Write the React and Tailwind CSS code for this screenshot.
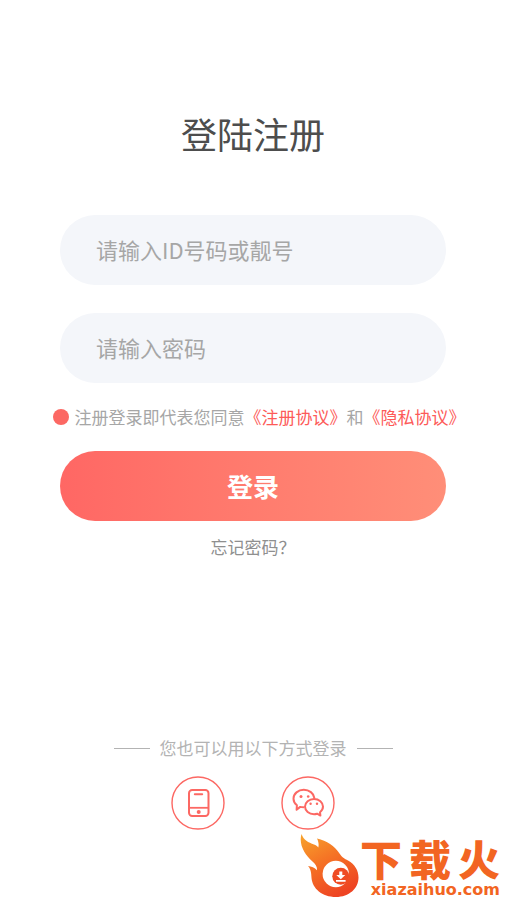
function PhoneIcon() {
  return (
    <svg viewBox="0 0 54 54" className="size-[54px]" fill="none" stroke="#fc6863" aria-hidden="true">
      <circle cx="27" cy="27" r="26" strokeWidth="1.4" />
      <rect x="18" y="14" width="19.5" height="26" rx="3.2" strokeWidth="2" />
      <path d="M18 31.8h19.5" strokeWidth="1.8" />
      <path d="M23.8 18.3h7.4" strokeWidth="2" strokeLinecap="round" />
      <circle cx="27.7" cy="36" r="2" fill="#fc6863" stroke="none" />
    </svg>
  );
}

function WechatIcon() {
  return (
    <svg viewBox="0 0 54 54" className="size-[54px]" fill="none" stroke="#fc6863" aria-hidden="true">
      <circle cx="27" cy="27" r="26" strokeWidth="1.4" />
      <path
        d="M22.5 31.3c-1 0-2.200-.1-3.300-.4L15.600 33.800l.3-4.600c-2.200-1.800-3.400-4-3.400-6.500 0-5 4.600-8.900 10.300-8.900 5.500 0 9.900 3.500 10.500 8"
        strokeWidth="2" strokeLinejoin="round" strokeLinecap="round"
      />
      <path
        d="M33 22.900c5 0 9 3.400 9 7.700 0 2.300-1.200 4.300-3 5.600l.4 3.400-3.300-1.900c-1 .3-2 .5-3.100.5-5 0-9-3.400-9-7.600s4-7.700 9-7.700Z"
        strokeWidth="2" strokeLinejoin="round"
      />
      <g fill="#fc6863" stroke="none">
        <circle cx="20" cy="20.500" r="1.500" />
        <circle cx="27.200" cy="20.500" r="1.300" />
        <circle cx="29.600" cy="27.800" r="1.200" />
        <circle cx="36" cy="27.800" r="1.200" />
      </g>
    </svg>
  );
}

function FlameLogo() {
  return (
    <svg viewBox="0 0 60 64" className="h-16 w-[60px]" aria-hidden="true">
      <defs>
        <linearGradient id="flame" x1="0.1" y1="0" x2="0.6" y2="1">
          <stop offset="0" stopColor="#f7a02c" />
          <stop offset="0.45" stopColor="#f57325" />
          <stop offset="1" stopColor="#ee4423" />
        </linearGradient>
      </defs>
      <path
        fill="url(#flame)"
        d="M1.500 0C3.500 6 8.500 8.500 14 10.500c2 .8 3.200 1.600 4.300 3C19 10.500 18.500 7.500 17 4.500c10 2 17.500 7.500 22.500 15 2.500 4 5 5 8.500 7C55 30.500 58.500 36.500 58.500 43.500 58.500 54.500 49 63 36 63 22 63 12.500 54.500 11.500 44c-.3-4.500-.3-8.500-3.500-12 3.500.3 6.500 1.700 9 4.300.3-3-1-5.800-4.500-8.800C4.500 20.500-1.500 10.500 1.500 0Z"
      />
      <circle cx="35.800" cy="40" r="13.200" fill="#fff" />
      <circle cx="40.800" cy="42.200" r="8.500" fill="#ef4c24" />
      <path d="M39.300 37.500h3v3.500h3l-4.500 4.300L36.300 41h3ZM36 46h9.600v1.800H36Z" fill="#fff" />
    </svg>
  );
}

export default function App() {
  return (
    <div className="flex min-h-screen flex-col bg-white pt-[106px] font-['Noto_Sans_CJK_SC',sans-serif]">
      <form className="flex flex-col" onSubmit={(e) => e.preventDefault()}>
        <h1 className="text-center text-4xl leading-[54px] text-[#4d4d4d]">登陆注册</h1>

        <div className="mt-[55px] flex flex-col gap-7 px-[60px]">
          <input
            type="text"
            aria-label="ID号码或靓号"
            placeholder="请输入ID号码或靓号"
            className="h-[70px] w-full rounded-full bg-[#f4f6fa] px-9 pb-0.5 text-[22px] text-[#4d4d4d] outline-none placeholder:text-[#a6a6a6]"
          />
          <input
            type="password"
            aria-label="密码"
            placeholder="请输入密码"
            className="h-[70px] w-full rounded-full bg-[#f4f6fa] px-9 pb-0.5 text-[22px] text-[#4d4d4d] outline-none placeholder:text-[#a6a6a6]"
          />
        </div>

        <div className="mt-5 flex items-center justify-center gap-1.5 pl-3 text-[17px] leading-7 whitespace-nowrap text-[#a6a6a6]">
          <input
            id="agree"
            type="checkbox"
            defaultChecked
            className="size-4 shrink-0 appearance-none rounded-full bg-[#fc6863]"
          />
          <div>
            <label htmlFor="agree">注册登录即代表您同意</label>
            <a href="#register" className="text-[#fd5a58]">《注册协议》</a>
            和
            <a href="#privacy" className="text-[#fd5a58]">《隐私协议》</a>
          </div>
        </div>

        <div className="mt-5 px-[60px]">
          <button
            type="submit"
            className="h-[70px] w-full rounded-full bg-linear-to-r from-[#ff6764] to-[#ff8e78] pb-0.5 text-[26px] font-bold text-white"
          >
            登录
          </button>
        </div>

        <a href="#forgot" className="mt-3 self-center text-[17px] leading-7 text-[#8f8f8f]">忘记密码？</a>
      </form>

      <section className="mt-auto flex flex-col items-center">
        <div className="flex items-center gap-2.5 text-[17px] leading-7 text-[#b3b3b3]">
          <span className="h-px w-9 bg-[#b3b3b3]" />
          <h2>您也可以用以下方式登录</h2>
          <span className="h-px w-9 bg-[#b3b3b3]" />
        </div>
        <div className="mt-3.5 flex gap-14">
          <button type="button" aria-label="手机登录"><PhoneIcon /></button>
          <button type="button" aria-label="微信登录"><WechatIcon /></button>
        </div>
      </section>

      <footer className="mt-1 flex h-[66px] justify-end pr-1.5 text-[#f26522]">
        <FlameLogo />
        <div className="flex w-[140px] flex-col items-end justify-between pt-2 pb-0.5">
          <span className="flex w-full justify-between text-[42px] leading-8 font-black">
            <span>下</span>
            <span>载</span>
            <span>火</span>
          </span>
          <span className="font-['DejaVu_Sans',sans-serif] text-base leading-4 font-bold">xiazaihuo.com</span>
        </div>
      </footer>
    </div>
  );
}
